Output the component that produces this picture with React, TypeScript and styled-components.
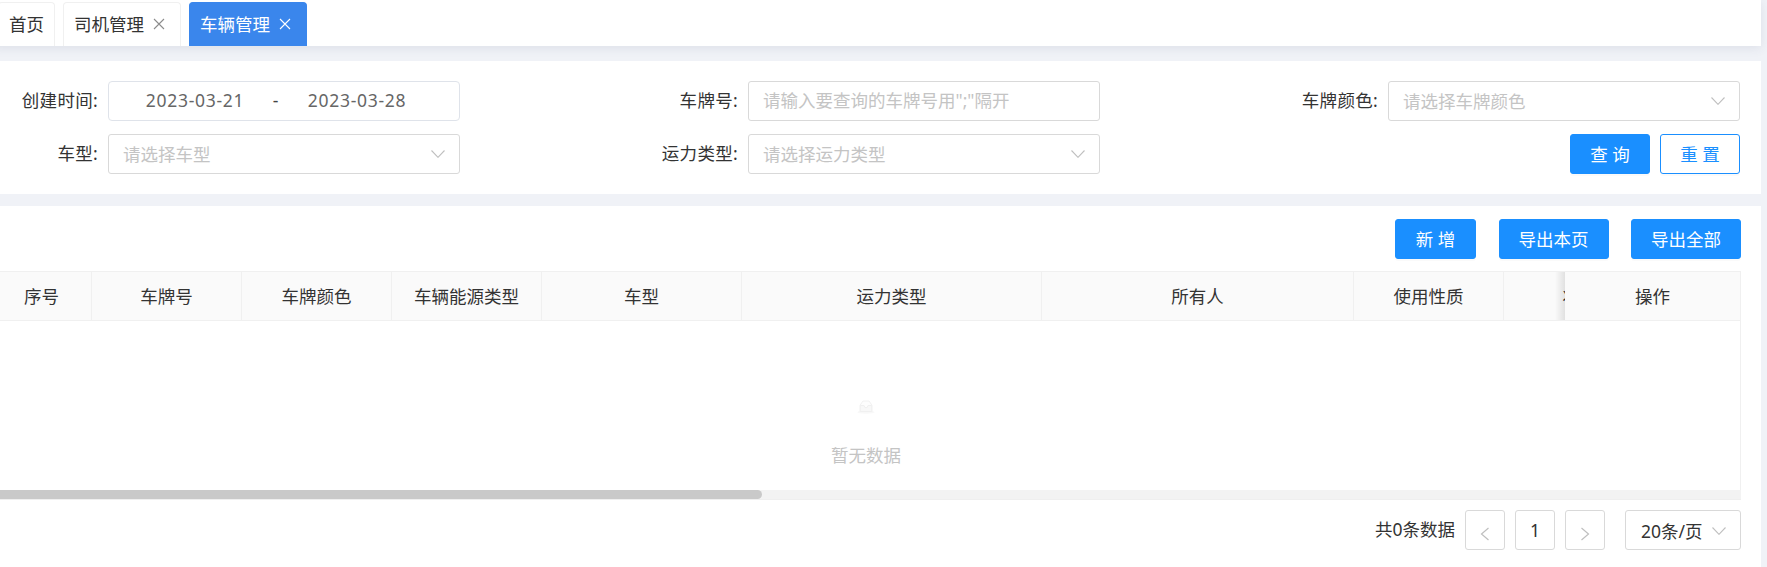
import React from "react";
import styled, { createGlobalStyle } from "styled-components";

const Global = createGlobalStyle`
  html, body { margin: 0; padding: 0; background: #f0f2f7; overflow: hidden; }
  body { font-family: "Noto Sans", "Noto Sans CJK SC", sans-serif; font-size: 17.5px; color: #333; }
  * { box-sizing: border-box; }
`;

const Page = styled.div`
  width: 1769px;
  height: 567px;
  margin-left: -8px;
  display: flex;
  flex-direction: column;
  background: #f0f2f7;
`;

const TabBar = styled.div`
  height: 46px;
  flex: none;
  background: #fff;
  display: flex;
  align-items: flex-end;
  gap: 8px;
  padding-left: 6px;
  box-shadow: 0 2px 10px rgba(60, 70, 110, 0.1);
`;

const Tab = styled.div<{ $active?: boolean; $closable?: boolean }>`
  height: 44px;
  display: flex;
  align-items: center;
  gap: 9px;
  padding: 0 ${(p) => (p.$closable ? "15px" : "10px")} 2px 10px;
  line-height: 42px;
  border: 1px solid ${(p) => (p.$active ? "#3a86ec" : "#f0f0f0")};
  border-bottom: none;
  border-radius: 4px 4px 0 0;
  background: ${(p) => (p.$active ? "#3a86ec" : "#fff")};
  color: ${(p) => (p.$active ? "#fff" : "#333")};
`;

const CloseIcon = styled.svg<{ $active?: boolean }>`
  width: 12px;
  height: 12px;
  flex: none;
  stroke: ${(p) => (p.$active ? "#fff" : "#8c8c8c")};
  stroke-width: 1.1;
  fill: none;
`;

const Panel = styled.section`
  background: #fff;
`;

const SearchPanel = styled(Panel)`
  margin-top: 15px;
  height: 133px;
  padding: 20px 0;
  display: grid;
  grid-template-columns: 116px 352px 288px 352px 288px 352px;
  grid-auto-rows: 40px;
  row-gap: 13px;
`;

const FieldLabel = styled.label`
  align-self: center;
  text-align: right;
  padding: 0 10px 2px 0;
  line-height: 24px;
  letter-spacing: 0.3px;
  white-space: nowrap;
`;

const BoxBase = styled.div`
  height: 40px;
  border: 1px solid #d9d9d9;
  border-radius: 3px;
  display: flex;
  align-items: center;
  background: #fff;
`;

const DateBox = styled(BoxBase)`
  border-color: #dfe3ea;
  border-radius: 4px;
  padding: 0 0 2px 26px;
  color: #666;
  letter-spacing: 0.7px;
`;

const DateValue = styled.span`
  width: 120px;
  text-align: center;
`;

const DateDash = styled.span`
  width: 42px;
  text-align: center;
  color: #444;
`;

const TextInput = styled.input`
  height: 40px;
  width: 100%;
  border: 1px solid #d9d9d9;
  border-radius: 3px;
  padding: 0 14px 2px;
  outline: none;
  font: inherit;
  background: #fff;
  &::placeholder { color: #c4c4c4; opacity: 1; }
`;

const SelectBox = styled(BoxBase)`
  padding: 0 14px 2px;
  justify-content: space-between;
`;

const Placeholder = styled.span`
  color: #c4c4c4;
`;

const Chevron = styled.svg`
  width: 14px;
  height: 8px;
  margin-top: 2px;
  flex: none;
  fill: none;
  stroke: #bfbfbf;
  stroke-width: 1.1;
`;

const ButtonGroup = styled.div`
  display: flex;
  justify-content: flex-end;
  gap: 10px;
`;

const Button = styled.button<{ $outline?: boolean; $width: number }>`
  width: ${(p) => p.$width}px;
  height: 40px;
  padding: 0 0 2px;
  font: inherit;
  border-radius: 3px;
  border: 1px solid #1a8fff;
  background: ${(p) => (p.$outline ? "#fff" : "#1a8fff")};
  color: ${(p) => (p.$outline ? "#1a8fff" : "#fff")};
  box-shadow: 0 2px 0 rgba(0, 0, 0, 0.02);
`;

const TablePanel = styled(Panel)`
  margin-top: 12px;
  flex: 1;
  padding-top: 13px;
`;

const ActionBar = styled.div`
  display: flex;
  justify-content: flex-end;
  height: 40px;
  margin-right: 20px;
`;

const ActionButtons = styled.div`
  display: flex;
  gap: 22.5px;
`;

const TableWrap = styled.div`
  position: relative;
  margin-top: 12px;
  margin-right: 20px;
  border-right: 1px solid #f0f0f0;
  overflow: hidden;
`;

const HeadRow = styled.div`
  display: flex;
  height: 50px;
  border-top: 1px solid #f0f0f0;
  border-bottom: 1px solid #f0f0f0;
  background: #fafafa;
  overflow: hidden;
`;

const HeadCell = styled.div<{ $width: number }>`
  flex: none;
  width: ${(p) => p.$width}px;
  line-height: 48px;
  text-align: center;
  color: #333;
  border-right: 1px solid #f0f0f0;
  white-space: nowrap;
`;

const FixedHead = styled.div`
  position: absolute;
  top: 1px;
  right: 0;
  width: 175px;
  height: 48px;
  line-height: 48px;
  text-align: center;
  background: #fafafa;
  color: #333;
  &::before {
    content: "";
    position: absolute;
    left: -10px;
    top: 0;
    bottom: 0;
    width: 10px;
    background: linear-gradient(to right, rgba(0, 0, 0, 0), rgba(0, 0, 0, 0.1));
  }
`;

const EmptyBody = styled.div`
  height: 169px;
  display: flex;
  flex-direction: column;
  align-items: center;
  padding-top: 79px;
`;

const EmptyIcon = styled.svg`
  width: 18px;
  height: 14px;
  display: block;
`;

const EmptyText = styled.div`
  margin-top: 28px;
  line-height: 26px;
  color: #c4c4c4;
`;

const ScrollTrack = styled.div`
  height: 10px;
  margin-right: 20px;
  background: #f3f3f3;
  border-bottom: 1px solid #efefef;
`;

const ScrollThumb = styled.div<{ $width: number }>`
  width: ${(p) => p.$width}px;
  height: 9px;
  background: #c9c9c9;
  border-radius: 0 5px 5px 0;
`;

const Pager = styled.div`
  display: flex;
  justify-content: flex-end;
  align-items: center;
  margin-top: 10px;
  margin-right: 20px;
  height: 40px;
`;

const PagerTotal = styled.span`
  margin-right: 10px;
  margin-top: -3px;
  line-height: 24px;
  color: #333;
`;

const PageBox = styled.div`
  width: 40px;
  height: 40px;
  border: 1px solid #d9d9d9;
  border-radius: 3px;
  margin-right: 10px;
  display: flex;
  align-items: center;
  justify-content: center;
  color: #333;
`;

const PageArrow = styled.svg`
  width: 10px;
  height: 14px;
  margin-top: 8px;
  fill: none;
  stroke: #bfbfbf;
  stroke-width: 1.2;
`;

const SizeBox = styled(BoxBase)`
  width: 116px;
  margin-left: 10px;
  padding: 0 14px 0 15px;
  justify-content: space-between;
  color: #333;
`;

const Close = ({ active }: { active?: boolean }) => (
  <CloseIcon $active={active} viewBox="0 0 12 12">
    <path d="M1 1 L11 11 M11 1 L1 11" />
  </CloseIcon>
);

const Down = () => (
  <Chevron viewBox="0 0 14 8">
    <path d="M0.5 0.5 L7 7.3 L13.5 0.5" />
  </Chevron>
);

const columns: [string, number][] = [
  ["序号", 100],
  ["车牌号", 150],
  ["车牌颜色", 150],
  ["车辆能源类型", 150],
  ["车型", 200],
  ["运力类型", 300],
  ["所有人", 312],
  ["使用性质", 150],
  ["状态", 153],
];

export default function App() {
  return (
    <Page>
      <Global />
      <TabBar>
        <Tab>首页</Tab>
        <Tab $closable>
          司机管理
          <Close />
        </Tab>
        <Tab $active $closable>
          车辆管理
          <Close active />
        </Tab>
      </TabBar>

      <SearchPanel>
        <FieldLabel>创建时间:</FieldLabel>
        <DateBox>
          <DateValue>2023-03-21</DateValue>
          <DateDash>-</DateDash>
          <DateValue>2023-03-28</DateValue>
        </DateBox>
        <FieldLabel>车牌号:</FieldLabel>
        <TextInput placeholder='请输入要查询的车牌号用";"隔开' />
        <FieldLabel>车牌颜色:</FieldLabel>
        <SelectBox>
          <Placeholder>请选择车牌颜色</Placeholder>
          <Down />
        </SelectBox>
        <FieldLabel>车型:</FieldLabel>
        <SelectBox>
          <Placeholder>请选择车型</Placeholder>
          <Down />
        </SelectBox>
        <FieldLabel>运力类型:</FieldLabel>
        <SelectBox>
          <Placeholder>请选择运力类型</Placeholder>
          <Down />
        </SelectBox>
        <span />
        <ButtonGroup>
          <Button $width={80}>查 询</Button>
          <Button $width={80} $outline>
            重 置
          </Button>
        </ButtonGroup>
      </SearchPanel>

      <TablePanel>
        <ActionBar>
          <ActionButtons>
            <Button $width={81}>新 增</Button>
            <Button $width={110}>导出本页</Button>
            <Button $width={110}>导出全部</Button>
          </ActionButtons>
        </ActionBar>
        <TableWrap>
          <HeadRow>
            {columns.map(([name, width]) => (
              <HeadCell key={name} $width={width}>
                {name}
              </HeadCell>
            ))}
          </HeadRow>
          <FixedHead>操作</FixedHead>
          <EmptyBody>
            <EmptyIcon viewBox="0 0 18 14">
              <ellipse cx="9" cy="12.2" rx="8.6" ry="1.6" fill="#f8f8f8" />
              <path d="M3.2 5 L6 1 H12 L14.8 5 V11.5 H3.2 Z" fill="#fdfdfd" stroke="#f2f2f2" />
              <path d="M3.2 5.5 H7 Q7.5 7.8 9 7.8 Q10.5 7.8 11 5.5 H14.8 V11.5 H3.2 Z" fill="#f8f8f8" stroke="#f0f0f0" />
            </EmptyIcon>
            <EmptyText>暂无数据</EmptyText>
          </EmptyBody>
        </TableWrap>
        <ScrollTrack>
          <ScrollThumb $width={770} />
        </ScrollTrack>
        <Pager>
          <PagerTotal>共0条数据</PagerTotal>
          <PageBox>
            <PageArrow viewBox="0 0 10 14">
              <path d="M8.5 1 L1.5 7 L8.5 13" />
            </PageArrow>
          </PageBox>
          <PageBox>1</PageBox>
          <PageBox>
            <PageArrow viewBox="0 0 10 14">
              <path d="M1.5 1 L8.5 7 L1.5 13" />
            </PageArrow>
          </PageBox>
          <SizeBox>
            20条/页
            <Down />
          </SizeBox>
        </Pager>
      </TablePanel>
    </Page>
  );
}
